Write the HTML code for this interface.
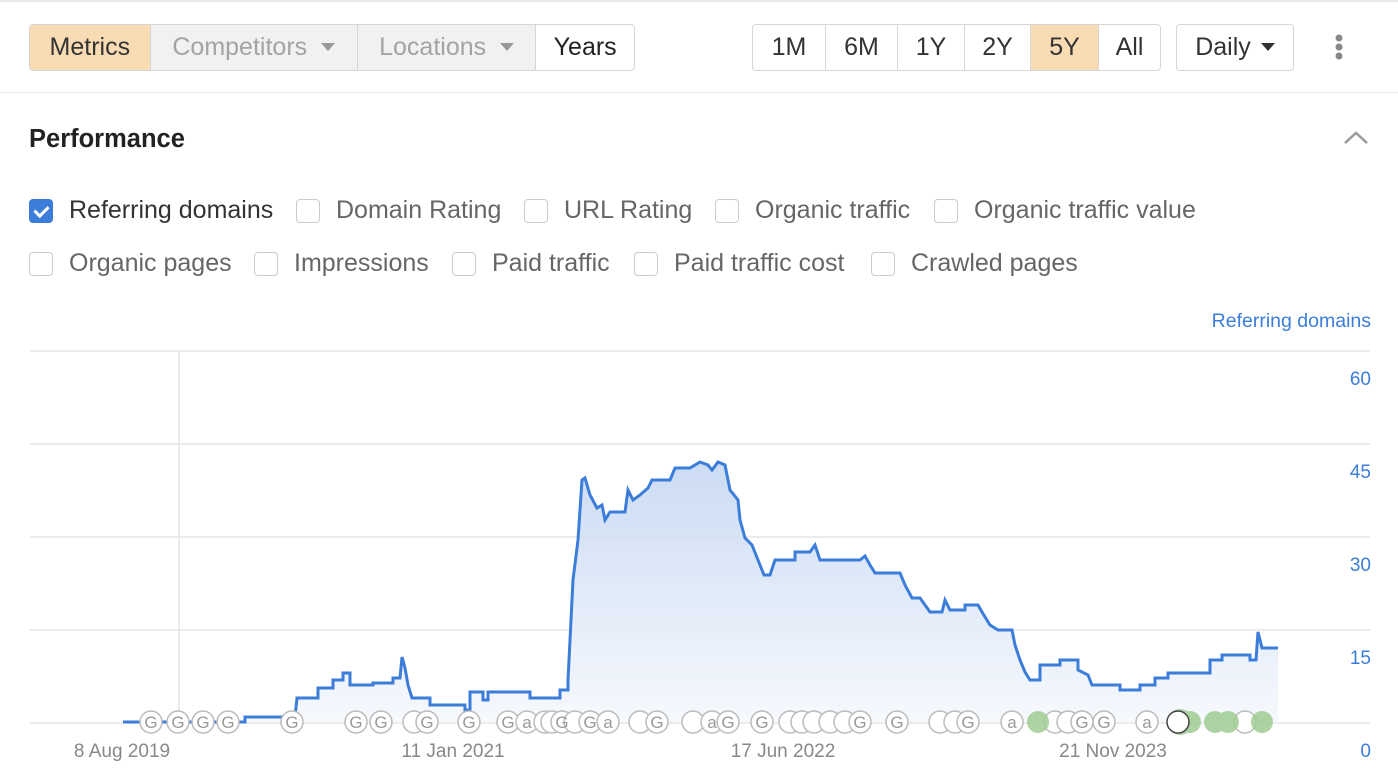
<!DOCTYPE html>
<html><head><meta charset="utf-8"><style>
*{box-sizing:border-box;margin:0;padding:0}
body{width:1398px;height:782px;background:#fff;font-family:"Liberation Sans",Arial,sans-serif;position:relative;overflow:hidden;color:#333}
.topline{position:absolute;left:0;top:0;width:1398px;height:2px;background:#e8e8e8}
.sep{position:absolute;left:0;top:92px;width:1398px;height:1px;background:#ececec}
.grp{position:absolute;top:24px;height:47px;display:flex;border:1px solid #d6d6d6;border-radius:4px;overflow:hidden}
.grp div{height:45px;line-height:45px;font-size:25px;padding:0;border-right:1px solid #d6d6d6;text-align:center;white-space:nowrap}
.grp div:last-child{border-right:none}
.on{background:#f9dcb3}
.dis{background:#f0f1f3;color:#a3a3a3}
.tri{display:inline-block;width:0;height:0;border-left:7px solid transparent;border-right:7px solid transparent;border-top:8px solid #999;vertical-align:middle;margin-left:14px;margin-top:-3px}
.title{position:absolute;left:29px;top:125px;font-size:25.5px;font-weight:bold;color:#222}
.cb{position:absolute;font-size:25px;color:#666;display:flex;align-items:center;white-space:nowrap}
.cb i{display:inline-block;width:24px;height:24px;border:1px solid #ccc;border-radius:4px;margin-right:16px}
.cb i.c{background:#3b7dd8;border-color:#3b7dd8;position:relative}
.cb i.c:after{content:"";position:absolute;left:7px;top:3px;width:6px;height:11px;border:solid #fff;border-width:0 3px 3px 0;transform:rotate(45deg)}
</style></head><body>
<div class="topline"></div>
<div class="grp" style="left:29px;width:606px">
<div class="on" style="width:121px">Metrics</div>
<div class="dis" style="width:208px">Competitors<span class="tri"></span></div>
<div class="dis" style="width:179px">Locations<span class="tri"></span></div>
<div style="width:98px;color:#222">Years</div>
</div>
<div class="grp" style="left:752px;width:409px">
<div style="width:73px">1M</div>
<div style="width:72px">6M</div>
<div style="width:67px">1Y</div>
<div style="width:66px">2Y</div>
<div class="on" style="width:68px">5Y</div>
<div style="width:61px">All</div>
</div>
<div class="grp" style="left:1176px;width:118px"><div style="width:116px">Daily<span class="tri" style="border-top-color:#333;margin-left:10px"></span></div></div>
<svg style="position:absolute;left:1332px;top:34px" width="14" height="28"><circle cx="7" cy="4" r="3.5" fill="#888"/><circle cx="7" cy="13" r="3.5" fill="#888"/><circle cx="7" cy="22" r="3.5" fill="#888"/></svg>
<div class="sep"></div>
<div class="title">Performance</div>
<svg style="position:absolute;left:1343px;top:130px" width="26" height="16"><path d="M2 13 L13 3 L24 13" fill="none" stroke="#999" stroke-width="2.5"/></svg>
<div class="cb" style="left:29px;top:196px;color:#333"><i class="c"></i>Referring domains</div>
<div class="cb" style="left:296px;top:196px"><i></i>Domain Rating</div>
<div class="cb" style="left:524px;top:196px"><i></i>URL Rating</div>
<div class="cb" style="left:715px;top:196px"><i></i>Organic traffic</div>
<div class="cb" style="left:934px;top:196px"><i></i>Organic traffic value</div>
<div class="cb" style="left:29px;top:249px"><i></i>Organic pages</div>
<div class="cb" style="left:254px;top:249px"><i></i>Impressions</div>
<div class="cb" style="left:452px;top:249px"><i></i>Paid traffic</div>
<div class="cb" style="left:634px;top:249px"><i></i>Paid traffic cost</div>
<div class="cb" style="left:871px;top:249px"><i></i>Crawled pages</div>
<svg style="position:absolute;left:0;top:300px" width="1398" height="482" viewBox="0 300 1398 482" font-family="Liberation Sans,Arial,sans-serif">
<defs><linearGradient id="g" x1="0" y1="0" x2="0" y2="1"><stop offset="0" stop-color="#c6d8f2"/><stop offset="1" stop-color="#f5f8fd"/></linearGradient></defs>
<text x="1371" y="327" text-anchor="end" font-size="19.5" fill="#3b7dd8">Referring domains</text>
<g stroke="#e6e6e6" stroke-width="1.5"><line x1="30" y1="351" x2="1370" y2="351"/><line x1="30" y1="444" x2="1370" y2="444"/><line x1="30" y1="537" x2="1370" y2="537"/><line x1="30" y1="630" x2="1370" y2="630"/><line x1="30" y1="723" x2="1370" y2="723"/><line x1="179" y1="351" x2="179" y2="723"/></g>
<g font-size="19" fill="#3b7dd8" text-anchor="end"><text x="1371" y="385">60</text><text x="1371" y="478">45</text><text x="1371" y="571">30</text><text x="1371" y="664">15</text><text x="1371" y="757">0</text></g>
<g font-size="19" fill="#888" text-anchor="middle"><text x="122" y="757">8 Aug 2019</text><text x="453" y="757">11 Jan 2021</text><text x="783" y="757">17 Jun 2022</text><text x="1113" y="757">21 Nov 2023</text></g>
<path d="M123 722 H245 V717 H295 L297 698 H318 V688 H333 V680 H343 V673 H350 V685 H373 V683 H393 V678 H400 L402 657 L405 668 L408 685 L412 698 H430 V705 H465 V710 H470 V692 H483 V700 H488 V692 H530 V698 H560 V690 H568 V680 L573 580 L578 540 L582 480 L585 478 L590 495 L597 508 L602 505 L605 520 L610 512 H625 L628 490 L633 500 L640 495 L648 488 L652 480 H670 L675 468 H690 L700 462 L708 465 L712 470 L718 462 L725 465 L730 490 L738 500 L740 520 L745 538 L752 545 L758 560 L764 575 H770 L775 560 H795 V552 H810 L815 545 L820 560 H860 L865 556 L870 565 L875 573 H900 L905 585 L912 598 H920 L925 605 L930 612 H942 L945 600 L950 610 H965 V605 H978 L982 612 L990 625 L998 630 H1012 L1015 645 L1020 660 L1025 672 L1030 680 H1040 V665 H1060 V660 H1078 V670 L1088 675 L1092 685 H1120 V690 H1140 V685 H1155 V678 H1168 V673 H1210 V660 H1222 V655 H1250 V660 H1256 L1258 632 L1262 648 H1278 V722 Z" fill="url(#g)" opacity="0.9"/>
<path d="M123 722 H245 V717 H295 L297 698 H318 V688 H333 V680 H343 V673 H350 V685 H373 V683 H393 V678 H400 L402 657 L405 668 L408 685 L412 698 H430 V705 H465 V710 H470 V692 H483 V700 H488 V692 H530 V698 H560 V690 H568 V680 L573 580 L578 540 L582 480 L585 478 L590 495 L597 508 L602 505 L605 520 L610 512 H625 L628 490 L633 500 L640 495 L648 488 L652 480 H670 L675 468 H690 L700 462 L708 465 L712 470 L718 462 L725 465 L730 490 L738 500 L740 520 L745 538 L752 545 L758 560 L764 575 H770 L775 560 H795 V552 H810 L815 545 L820 560 H860 L865 556 L870 565 L875 573 H900 L905 585 L912 598 H920 L925 605 L930 612 H942 L945 600 L950 610 H965 V605 H978 L982 612 L990 625 L998 630 H1012 L1015 645 L1020 660 L1025 672 L1030 680 H1040 V665 H1060 V660 H1078 V670 L1088 675 L1092 685 H1120 V690 H1140 V685 H1155 V678 H1168 V673 H1210 V660 H1222 V655 H1250 V660 H1256 L1258 632 L1262 648 H1278" fill="none" stroke="#3b7dd8" stroke-width="3"/>
<g font-size="17" fill="#999" text-anchor="middle" stroke-width="1.5">
<g stroke="#bbb" fill="#fff">
<circle cx="151" cy="722" r="11"/><circle cx="178" cy="722" r="11"/><circle cx="203" cy="722" r="11"/><circle cx="228" cy="722" r="11"/><circle cx="292" cy="722" r="11"/><circle cx="356" cy="722" r="11"/><circle cx="381" cy="722" r="11"/><circle cx="414" cy="722" r="11"/><circle cx="427" cy="722" r="11"/><circle cx="469" cy="722" r="11"/><circle cx="508" cy="722" r="11"/><circle cx="527" cy="722" r="11"/><circle cx="545" cy="722" r="11"/><circle cx="552" cy="722" r="11"/><circle cx="562" cy="722" r="11"/><circle cx="575" cy="722" r="11"/><circle cx="590" cy="722" r="11"/><circle cx="608" cy="722" r="11"/><circle cx="640" cy="722" r="11"/><circle cx="657" cy="722" r="11"/><circle cx="693" cy="722" r="11"/><circle cx="712" cy="722" r="11"/><circle cx="728" cy="722" r="11"/><circle cx="762" cy="722" r="11"/><circle cx="790" cy="722" r="11"/><circle cx="802" cy="722" r="11"/><circle cx="814" cy="722" r="11"/><circle cx="830" cy="722" r="11"/><circle cx="845" cy="722" r="11"/><circle cx="860" cy="722" r="11"/><circle cx="897" cy="722" r="11"/><circle cx="940" cy="722" r="11"/><circle cx="955" cy="722" r="11"/><circle cx="968" cy="722" r="11"/><circle cx="1012" cy="722" r="11"/><circle cx="1055" cy="722" r="11"/><circle cx="1068" cy="722" r="11"/><circle cx="1082" cy="722" r="11"/><circle cx="1104" cy="722" r="11"/><circle cx="1147" cy="722" r="11"/><circle cx="1245" cy="722" r="11"/>
</g>
<g fill="#9fcc92" opacity="0.85"><circle cx="1038" cy="722" r="11"/><circle cx="1180" cy="722" r="13"/><circle cx="1190" cy="722" r="11"/><circle cx="1215" cy="722" r="11"/><circle cx="1228" cy="722" r="11"/><circle cx="1262" cy="722" r="11"/></g>
<circle cx="1178" cy="722" r="11" fill="#fff" stroke="#444" stroke-width="1.5"/>
<text x="151" y="728">G</text><text x="178" y="728">G</text><text x="203" y="728">G</text><text x="228" y="728">G</text><text x="292" y="728">G</text><text x="356" y="728">G</text><text x="381" y="728">G</text><text x="427" y="728">G</text><text x="469" y="728">G</text><text x="508" y="728">G</text><text x="527" y="728">a</text><text x="562" y="728">G</text><text x="590" y="728">G</text><text x="608" y="728">a</text><text x="657" y="728">G</text><text x="712" y="728">a</text><text x="728" y="728">G</text><text x="762" y="728">G</text><text x="860" y="728">G</text><text x="897" y="728">G</text><text x="968" y="728">G</text><text x="1012" y="728">a</text><text x="1082" y="728">G</text><text x="1104" y="728">G</text><text x="1147" y="728">a</text>
</g>
</svg>
</body></html>
